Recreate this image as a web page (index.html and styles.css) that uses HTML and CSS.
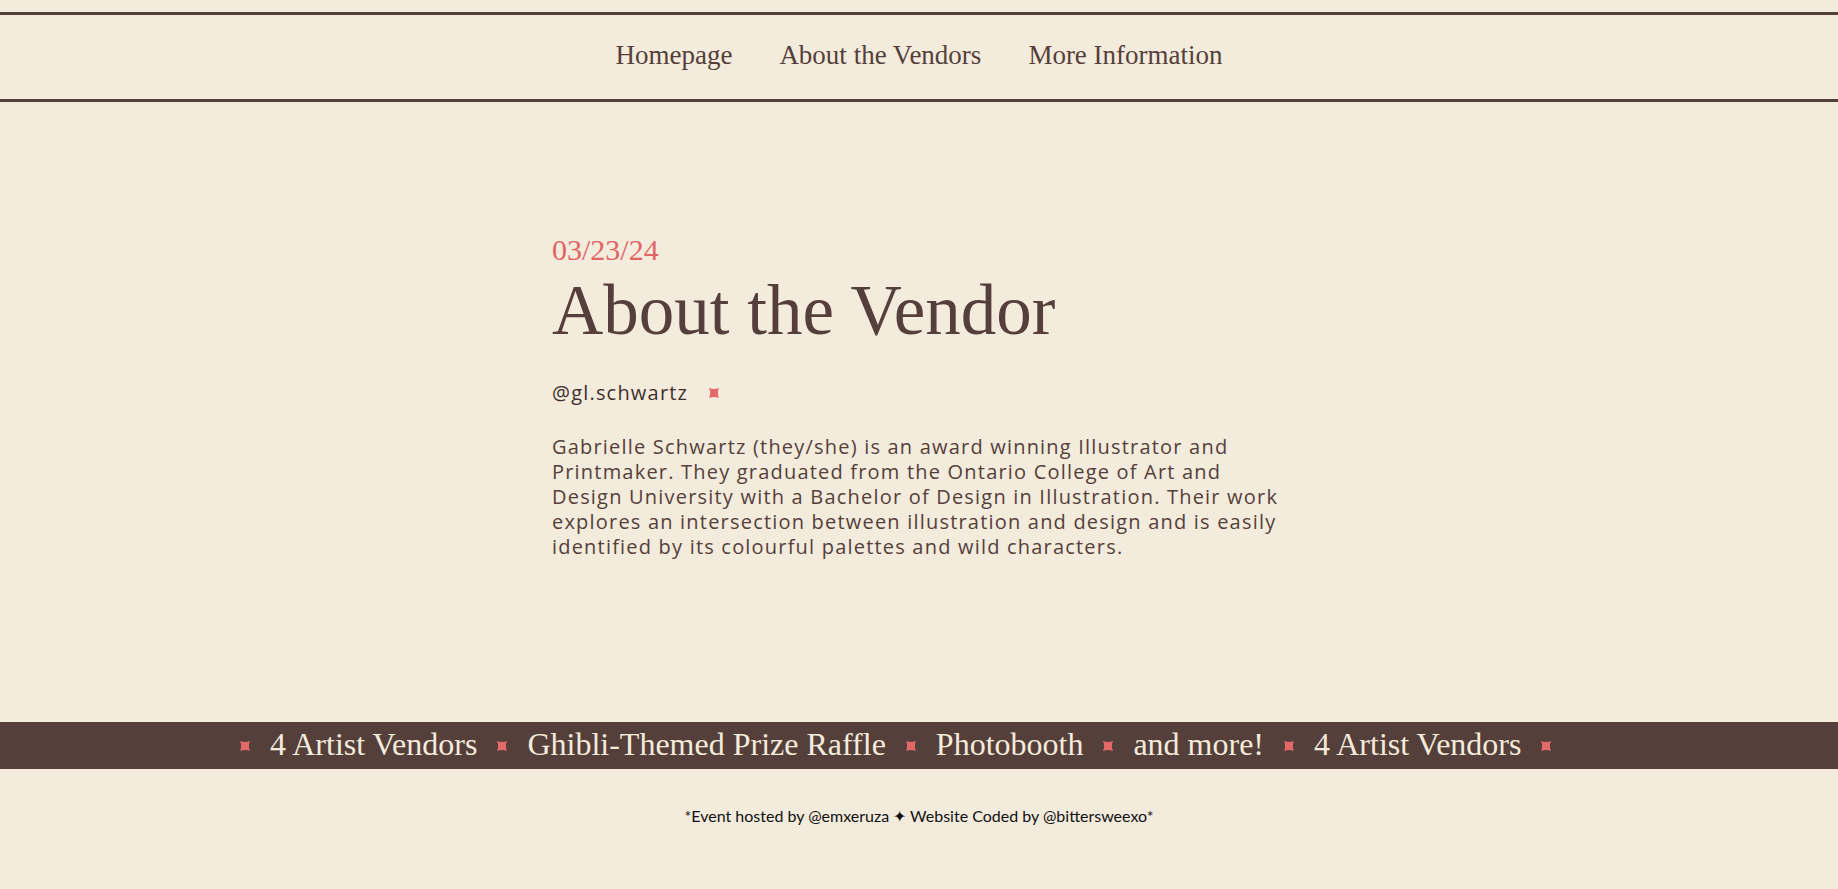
FILE: index.html
```html
<!DOCTYPE html>
<html lang="en">
<head>
<meta charset="utf-8">
<title>About the Vendor</title>
<link rel="stylesheet" href="styles.css">
</head>
<body>
<nav class="nav">
  <a class="nav-link" href="#">Homepage</a>
  <a class="nav-link" href="#">About the Vendors</a>
  <a class="nav-link" href="#">More Information</a>
</nav>

<main class="main">
  <section class="vendor">
    <p class="date">03/23/24</p>
    <h1 class="title">About the Vendor</h1>
    <div class="handle-row">
      <span class="handle">@gl.schwartz</span>
      <svg class="star" viewBox="0 0 12 12" aria-hidden="true"><path d="M1 1 Q6 3.2 11 1 Q8.8 6 11 11 Q6 8.8 1 11 Q3.2 6 1 1Z"/></svg>
    </div>
    <p class="bio">Gabrielle Schwartz (they/she) is an award winning Illustrator and Printmaker. They graduated from the Ontario College of Art and Design University with a Bachelor of Design in Illustration. Their work explores an intersection between illustration and design and is easily identified by its colourful palettes and wild characters.</p>
  </section>
</main>

<div class="banner">
  <div class="ticker">
    <svg class="star" viewBox="0 0 12 12" aria-hidden="true"><path d="M1 1 Q6 3.2 11 1 Q8.8 6 11 11 Q6 8.8 1 11 Q3.2 6 1 1Z"/></svg>
    <span class="tick-text">4 Artist Vendors</span>
    <svg class="star" viewBox="0 0 12 12" aria-hidden="true"><path d="M1 1 Q6 3.2 11 1 Q8.8 6 11 11 Q6 8.8 1 11 Q3.2 6 1 1Z"/></svg>
    <span class="tick-text">Ghibli-Themed Prize Raffle</span>
    <svg class="star" viewBox="0 0 12 12" aria-hidden="true"><path d="M1 1 Q6 3.2 11 1 Q8.8 6 11 11 Q6 8.8 1 11 Q3.2 6 1 1Z"/></svg>
    <span class="tick-text">Photobooth</span>
    <svg class="star" viewBox="0 0 12 12" aria-hidden="true"><path d="M1 1 Q6 3.2 11 1 Q8.8 6 11 11 Q6 8.8 1 11 Q3.2 6 1 1Z"/></svg>
    <span class="tick-text">and more!</span>
    <svg class="star" viewBox="0 0 12 12" aria-hidden="true"><path d="M1 1 Q6 3.2 11 1 Q8.8 6 11 11 Q6 8.8 1 11 Q3.2 6 1 1Z"/></svg>
    <span class="tick-text">4 Artist Vendors</span>
    <svg class="star" viewBox="0 0 12 12" aria-hidden="true"><path d="M1 1 Q6 3.2 11 1 Q8.8 6 11 11 Q6 8.8 1 11 Q3.2 6 1 1Z"/></svg>
  </div>
</div>

<footer class="footer">*Event hosted by @emxeruza ✦ Website Coded by @bittersweexo*</footer>
</body>
</html>
```

FILE: styles.css
```css
html, body {
  margin: 0;
  padding: 0;
}

body {
  background: #f3ebdc;
  color: #553f3a;
  font-family: "Lato", "Noto Sans", sans-serif;
  height: 889px;
  overflow: hidden;
}

.nav {
  margin-top: 12px;
  height: 80px;
  border-top: 3px solid #553f3a;
  border-bottom: 3px solid #553f3a;
  display: flex;
  justify-content: center;
  align-items: center;
  gap: 47px;
  padding-bottom: 4px;
  box-sizing: content-box;
}

.nav-link {
  font-family: "Liberation Serif", "DejaVu Serif", serif;
  font-size: 27px;
  color: #553f3a;
  text-decoration: none;
}

.main {
  height: 620px;
  box-sizing: border-box;
  padding-top: 130px;
}

.vendor {
  width: 734px;
  margin: 0 auto;
}

.date {
  margin: 0;
  font-family: "Liberation Serif", "DejaVu Serif", serif;
  font-size: 30px;
  line-height: 36px;
  color: #e06666;
}

.title {
  margin: 2px 0 0;
  font-family: "Liberation Serif", "DejaVu Serif", serif;
  font-weight: 400;
  font-size: 71px;
  line-height: 80px;
  color: #553f3a;
}

.handle-row {
  margin-top: 31px;
  display: flex;
  align-items: center;
  gap: 20px;
  height: 24px;
}

.handle {
  font-family: "Open Sans", "Noto Sans", sans-serif;
  font-size: 20px;
  line-height: 24px;
  letter-spacing: 1.2px;
  color: #3f302c;
}

.star {
  width: 12px;
  height: 12px;
  fill: #e46a6a;
  flex: none;
}

.bio {
  margin: 29px 0 0;
  font-family: "Open Sans", "Noto Sans", sans-serif;
  font-size: 20px;
  line-height: 25px;
  letter-spacing: 1.2px;
  color: #553f3a;
}

.banner {
  height: 47px;
  background: #553f3a;
  overflow: hidden;
}

.ticker {
  height: 100%;
  display: flex;
  align-items: center;
  gap: 19px;
  padding-left: 239px;
  padding-bottom: 3px;
  box-sizing: border-box;
  white-space: nowrap;
}

.ticker .star {
  margin-top: 3px;
}

.tick-text {
  font-family: "Liberation Serif", "DejaVu Serif", serif;
  font-size: 32px;
  line-height: 40px;
  color: #f3ebdc;
}

.footer {
  margin-top: 37px;
  text-align: center;
  font-size: 16px;
  line-height: 20px;
  color: #111;
}
```
